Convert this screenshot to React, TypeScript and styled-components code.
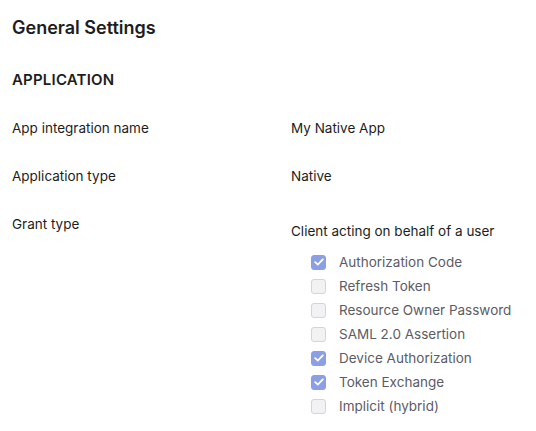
import styled, { createGlobalStyle } from 'styled-components'

const GlobalStyle = createGlobalStyle`
  body {
    margin: 0;
    background: #ffffff;
    font-family: Inter, "Noto Sans", sans-serif;
    color: #1d1d21;
  }
`

const grantTypes = [
  { label: 'Authorization Code', checked: true },
  { label: 'Refresh Token', checked: false },
  { label: 'Resource Owner Password', checked: false },
  { label: 'SAML 2.0 Assertion', checked: false },
  { label: 'Device Authorization', checked: true },
  { label: 'Token Exchange', checked: true },
  { label: 'Implicit (hybrid)', checked: false },
]

const Page = styled.div`
  padding: 16px 12px 0 12px;
`

const Title = styled.h2`
  margin: 0;
  font-size: 18px;
  font-weight: 600;
  line-height: 24px;
`

const SectionTitle = styled.h3`
  margin: 29px 0 0 0;
  font-size: 15px;
  font-weight: 600;
  line-height: 22px;
  letter-spacing: 0.2px;
`

const Rows = styled.div`
  display: flex;
  flex-direction: column;
  gap: 28px;
  margin-top: 27px;
`

const Row = styled.div`
  display: grid;
  grid-template-columns: 279px 1fr;
  font-size: 13.5px;
  line-height: 20px;
`

const Value = styled.div`
  display: flex;
  flex-direction: column;
`

const GrantIntro = styled.div`
  margin-top: 7px;
`

const CheckList = styled.ul`
  list-style: none;
  margin: 11px 0 0 20px;
  padding: 0;
  display: flex;
  flex-direction: column;
  gap: 4px;
`

const CheckItem = styled.li`
  display: flex;
  align-items: center;
  gap: 13px;
  color: #5c5c66;
  font-size: 13.5px;
  line-height: 20px;
`

const Box = styled.span<{ $checked: boolean }>`
  width: 15px;
  height: 15px;
  box-sizing: border-box;
  border-radius: 3px;
  display: inline-flex;
  align-items: center;
  justify-content: center;
  background: ${(p) => (p.$checked ? '#8c9fe6' : '#f2f2f4')};
  border: 1px solid ${(p) => (p.$checked ? '#8c9fe6' : '#d4d4da')};
`

const Check = () => (
  <svg width="10" height="8" viewBox="0 0 10 8" fill="none">
    <path d="M1.2 4.2L3.8 6.6L8.8 1.4" stroke="#ffffff" strokeWidth="1.8" strokeLinecap="round" strokeLinejoin="round" />
  </svg>
)

export default function App() {
  return (
    <>
      <GlobalStyle />
      <Page>
        <Title>General Settings</Title>
        <SectionTitle>APPLICATION</SectionTitle>
        <Rows>
          <Row>
            <div>App integration name</div>
            <div>My Native App</div>
          </Row>
          <Row>
            <div>Application type</div>
            <div>Native</div>
          </Row>
          <Row>
            <div>Grant type</div>
            <Value>
              <GrantIntro>Client acting on behalf of a user</GrantIntro>
              <CheckList>
                {grantTypes.map((g) => (
                  <CheckItem key={g.label}>
                    <Box $checked={g.checked}>{g.checked && <Check />}</Box>
                    {g.label}
                  </CheckItem>
                ))}
              </CheckList>
            </Value>
          </Row>
        </Rows>
      </Page>
    </>
  )
}
